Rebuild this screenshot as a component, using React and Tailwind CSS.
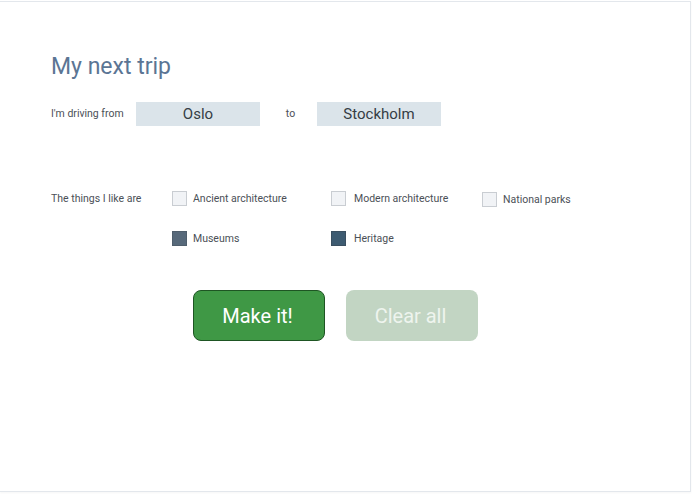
import React, { useState } from 'react';

const font = { fontFamily: 'Roboto, "Noto Sans", sans-serif' };

const interests = [
  { id: 'ancient', label: 'Ancient architecture', gap: 'ml-[6px]' },
  { id: 'modern', label: 'Modern architecture', gap: 'ml-[8px]' },
  { id: 'parks', label: 'National parks', gap: 'ml-[6px]' },
  { id: 'museums', label: 'Museums', gap: 'ml-[6px]' },
  { id: 'heritage', label: 'Heritage', gap: 'ml-[8px]' },
];

function Check({ label, gap, checked, dark, onToggle }) {
  // checked boxes are plain filled squares in this design
  const box = checked
    ? dark
      ? 'bg-[#3d5b71] border-[#3a4f60]'
      : 'bg-[#57697a] border-[#4f5e6c]'
    : 'bg-[#f1f3f6] border-[#c9cdd2]';

  return (
    <label className="flex items-center h-[15px] cursor-pointer select-none" onClick={onToggle}>
      <span className={`w-[15px] h-[15px] border ${box}`}></span>
      <span className={`${gap} text-[10.5px] leading-[15px] text-[#4b5057]`}>{label}</span>
    </label>
  );
}

export default function App() {
  const [from, setFrom] = useState('Oslo');
  const [to, setTo] = useState('Stockholm');
  const [picked, setPicked] = useState({ museums: true, heritage: true });

  const toggle = (id) => setPicked((p) => ({ ...p, [id]: !p[id] }));

  return (
    <div className="w-[695px] h-[494px] bg-white" style={font}>
      <div className="w-[691px] h-[491px] mt-px border-t border-r border-b border-[#e3e7ec] shadow-[0_1px_2px_rgba(0,0,0,0.04)] pl-[51px] pt-[51px]">
        <h1 className="text-[23px] leading-[28px] text-[#5b7594]">My next trip</h1>

        {/* route */}
        <div className="flex items-center mt-[21px] h-[24px]">
          <span className="w-[85px] text-[10.5px] text-[#4b5057]">I'm driving from</span>
          <input
            value={from}
            onChange={(e) => setFrom(e.target.value)}
            className="w-[124px] h-[24px] bg-[#dbe4ea] text-center text-[15px] text-[#353d45] outline-none"
          />
          <span className="w-[57px] pl-[4px] text-center text-[10.5px] text-[#4b5057]">to</span>
          <input
            value={to}
            onChange={(e) => setTo(e.target.value)}
            className="w-[124px] h-[24px] bg-[#dbe4ea] text-center text-[15px] text-[#353d45] outline-none"
          />
        </div>

        {/* interests */}
        <div className="flex mt-[65px]">
          <span className="w-[121px] text-[10.5px] text-[#4b5057] leading-[15px]">The things I like are</span>
          <div className="grid grid-cols-[159px_151px_auto] gap-y-[24px]">
            {interests.map((it) => (
              <div key={it.id} className={it.id === 'parks' ? 'mt-px' : ''}>
                <Check
                  label={it.label}
                  gap={it.gap}
                  checked={!!picked[it.id]}
                  dark={it.id === 'heritage'}
                  onToggle={() => toggle(it.id)}
                />
              </div>
            ))}
          </div>
        </div>

        {/* actions */}
        <div className="flex gap-[21px] mt-[44px] ml-[142px]">
          <button className="w-[132px] h-[51px] pr-[3px] rounded-[8px] bg-[#3f9845] border border-[#1e5523] text-white text-[20px]">
            Make it!
          </button>
          <button
            onClick={() => setPicked({})}
            className="w-[132px] h-[51px] pr-[3px] rounded-[8px] bg-[#c2d5c3] text-[#eef4ee] text-[20px]"
          >
            Clear all
          </button>
        </div>
      </div>
    </div>
  );
}
